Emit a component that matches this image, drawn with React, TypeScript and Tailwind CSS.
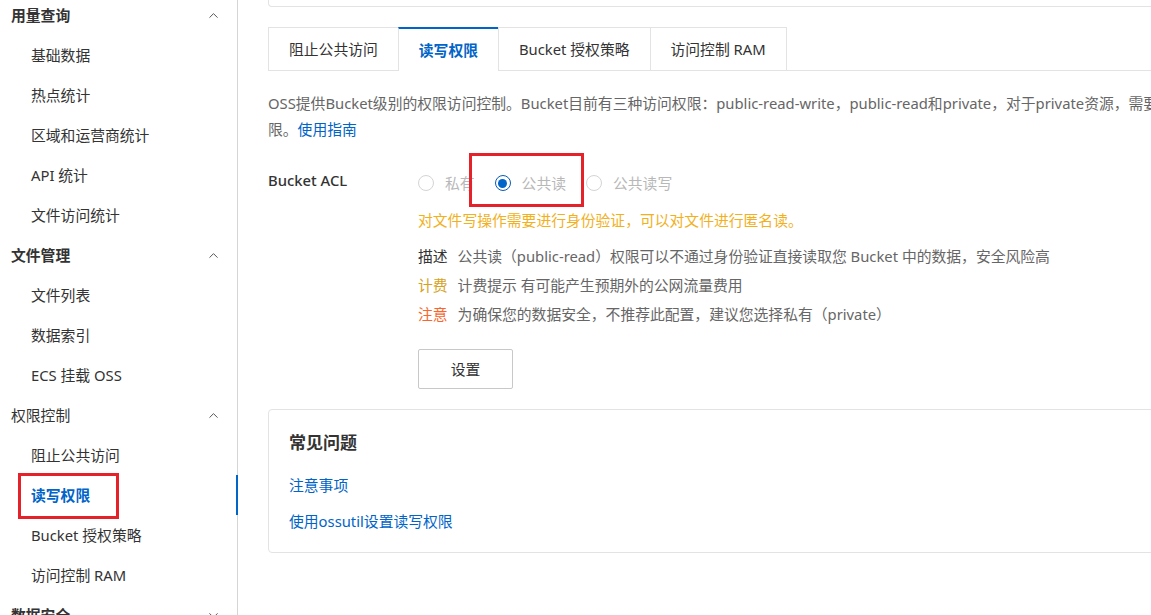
import React from 'react';
import { ChevronUp, ChevronDown } from 'lucide-react';

type NavRow = { label: string; header?: boolean; bold?: boolean; open?: boolean; active?: boolean };

const navRows: NavRow[] = [
  { label: '用量查询', header: true, bold: true, open: true },
  { label: '基础数据' },
  { label: '热点统计' },
  { label: '区域和运营商统计' },
  { label: 'API 统计' },
  { label: '文件访问统计' },
  { label: '文件管理', header: true, bold: true, open: true },
  { label: '文件列表' },
  { label: '数据索引' },
  { label: 'ECS 挂载 OSS' },
  { label: '权限控制', header: true, open: true },
  { label: '阻止公共访问' },
  { label: '读写权限', active: true },
  { label: 'Bucket 授权策略' },
  { label: '访问控制 RAM' },
  { label: '数据安全', header: true, bold: true, open: false },
];

const tabs = ['阻止公共访问', '读写权限', 'Bucket 授权策略', '访问控制 RAM'];

const Radio: React.FC<{ label: string; checked?: boolean; marked?: boolean }> = ({ label, checked, marked }) => (
  <div className="relative flex items-center gap-[11px] mr-[20px]">
    {checked ? (
      <span className="w-[16px] h-[16px] rounded-full border border-[#0a5bb5] bg-white flex items-center justify-center">
        <span className="w-[9px] h-[9px] rounded-full bg-[#0064c8]" />
      </span>
    ) : (
      <span className="w-[16px] h-[16px] rounded-full border border-[#d4d4d4] bg-white" />
    )}
    <span className="text-[#b8b8b8] leading-[22px]">{label}</span>
    {marked && (
      <div className="absolute left-[-26px] top-[-19px] w-[115px] h-[54px] border-[3px] border-[#e5212a]" />
    )}
  </div>
);

const App: React.FC = () => {
  return (
    <div className="w-[1151px] h-[615px] overflow-hidden flex bg-white text-[14.8px] text-[#333] font-['Noto_Sans','Noto_Sans_CJK_SC',sans-serif]">
      {/* sidebar */}
      <aside className="w-[238px] shrink-0 border-r border-[#d5d5d5]">
        <div className="-mt-[5px]">
          {navRows.map((r) => (
            <div key={r.label} className="relative h-[40px] flex items-center">
              {r.header ? (
                <>
                  <span className={`pl-[11px] leading-[22px] text-[#333] ${r.bold ? 'font-bold' : ''}`}>{r.label}</span>
                  <span className="ml-auto mr-[16px] text-[#555]">
                    {r.open ? <ChevronUp size={15} strokeWidth={1.6} /> : <ChevronDown size={15} strokeWidth={1.6} />}
                  </span>
                </>
              ) : (
                <span className={`pl-[31px] leading-[22px] ${r.active ? 'text-[#0064c8] font-bold' : 'text-[#333]'}`}>{r.label}</span>
              )}
              {r.active && (
                <>
                  <div className="absolute right-[-1px] top-0 h-full w-[2px] bg-[#0064c8]" />
                  <div className="absolute left-[18px] top-[-2px] w-[101px] h-[46px] border-[3px] border-[#e5212a]" />
                </>
              )}
            </div>
          ))}
        </div>
      </aside>

      {/* main */}
      <main className="flex-1 overflow-hidden pl-[30px]">
        <div className="w-[1000px]">
          <div className="h-[7px] border-x border-b border-[#e3e3e3] rounded-b-[4px]" />

          {/* tabs */}
          <div className="mt-[20px] flex items-end border-b border-[#e3e3e3] h-[44px]">
            {tabs.map((t, i) => {
              const active = i === 1;
              return (
                <div
                  key={t}
                  className={`h-[43px] px-[20px] flex items-center border-l ${i === tabs.length - 1 ? 'border-r' : ''} border-[#e3e3e3] ${
                    active
                      ? 'border-t-2 border-t-[#0064c8] h-[44px] -mb-px bg-white text-[#0064c8] font-bold'
                      : 'border-t text-[#333]'
                  }`}
                >
                  <span className="leading-[22px]">{t}</span>
                </div>
              );
            })}
          </div>

          {/* description */}
          <div className="mt-[19px] text-[#666] leading-[26px]">
            <div className="whitespace-nowrap">
              OSS提供Bucket级别的权限访问控制。Bucket目前有三种访问权限：public-read-write，public-read和private，对于private资源，需要获得授权后才能访问。详细说明请参见设置读写权
            </div>
            <div className="whitespace-nowrap">
              限。<span className="text-[#0064c8]">使用指南</span>
            </div>
          </div>

          {/* ACL form */}
          <div className="mt-[27px] flex">
            <div className="w-[150px] leading-[22px] font-medium text-[#333]">Bucket ACL</div>
            <div className="flex flex-col">
              <div className="mt-[3px] h-[22px] flex items-center">
                <Radio label="私有" />
                <Radio label="公共读" checked marked />
                <Radio label="公共读写" />
              </div>
              <div className="mt-[15px] leading-[22px] text-[#f2b01c]">对文件写操作需要进行身份验证，可以对文件进行匿名读。</div>
              <div className="mt-[11px] flex flex-col">
                <div className="h-[29px] leading-[29px] flex gap-[10px]">
                  <span className="text-[#333]">描述</span>
                  <span className="text-[#666]">公共读（public-read）权限可以不通过身份验证直接读取您 Bucket 中的数据，安全风险高</span>
                </div>
                <div className="h-[29px] leading-[29px] flex gap-[10px]">
                  <span className="text-[#d6a21e]">计费</span>
                  <span className="text-[#666]">计费提示 有可能产生预期外的公网流量费用</span>
                </div>
                <div className="h-[29px] leading-[29px] flex gap-[10px]">
                  <span className="text-[#f9662d]">注意</span>
                  <span className="text-[#666]">为确保您的数据安全，不推荐此配置，建议您选择私有（private）</span>
                </div>
              </div>
              <button className="mt-[20px] w-[95px] h-[40px] border border-[#c8c8c8] rounded-[2px] bg-white text-[#333] leading-[22px]">
                设置
              </button>
            </div>
          </div>

          {/* FAQ */}
          <div className="mt-[20px] border border-[#e3e3e3] rounded-[4px] px-[20px] pt-[21px] pb-[20px]">
            <div className="text-[17px] font-bold leading-[24px] text-[#333]">常见问题</div>
            <div className="mt-[19px] leading-[22px] text-[#0064c8]">注意事项</div>
            <div className="mt-[14px] leading-[22px] text-[#0064c8]">使用ossutil设置读写权限</div>
          </div>
        </div>
      </main>
    </div>
  );
};

export default App;
